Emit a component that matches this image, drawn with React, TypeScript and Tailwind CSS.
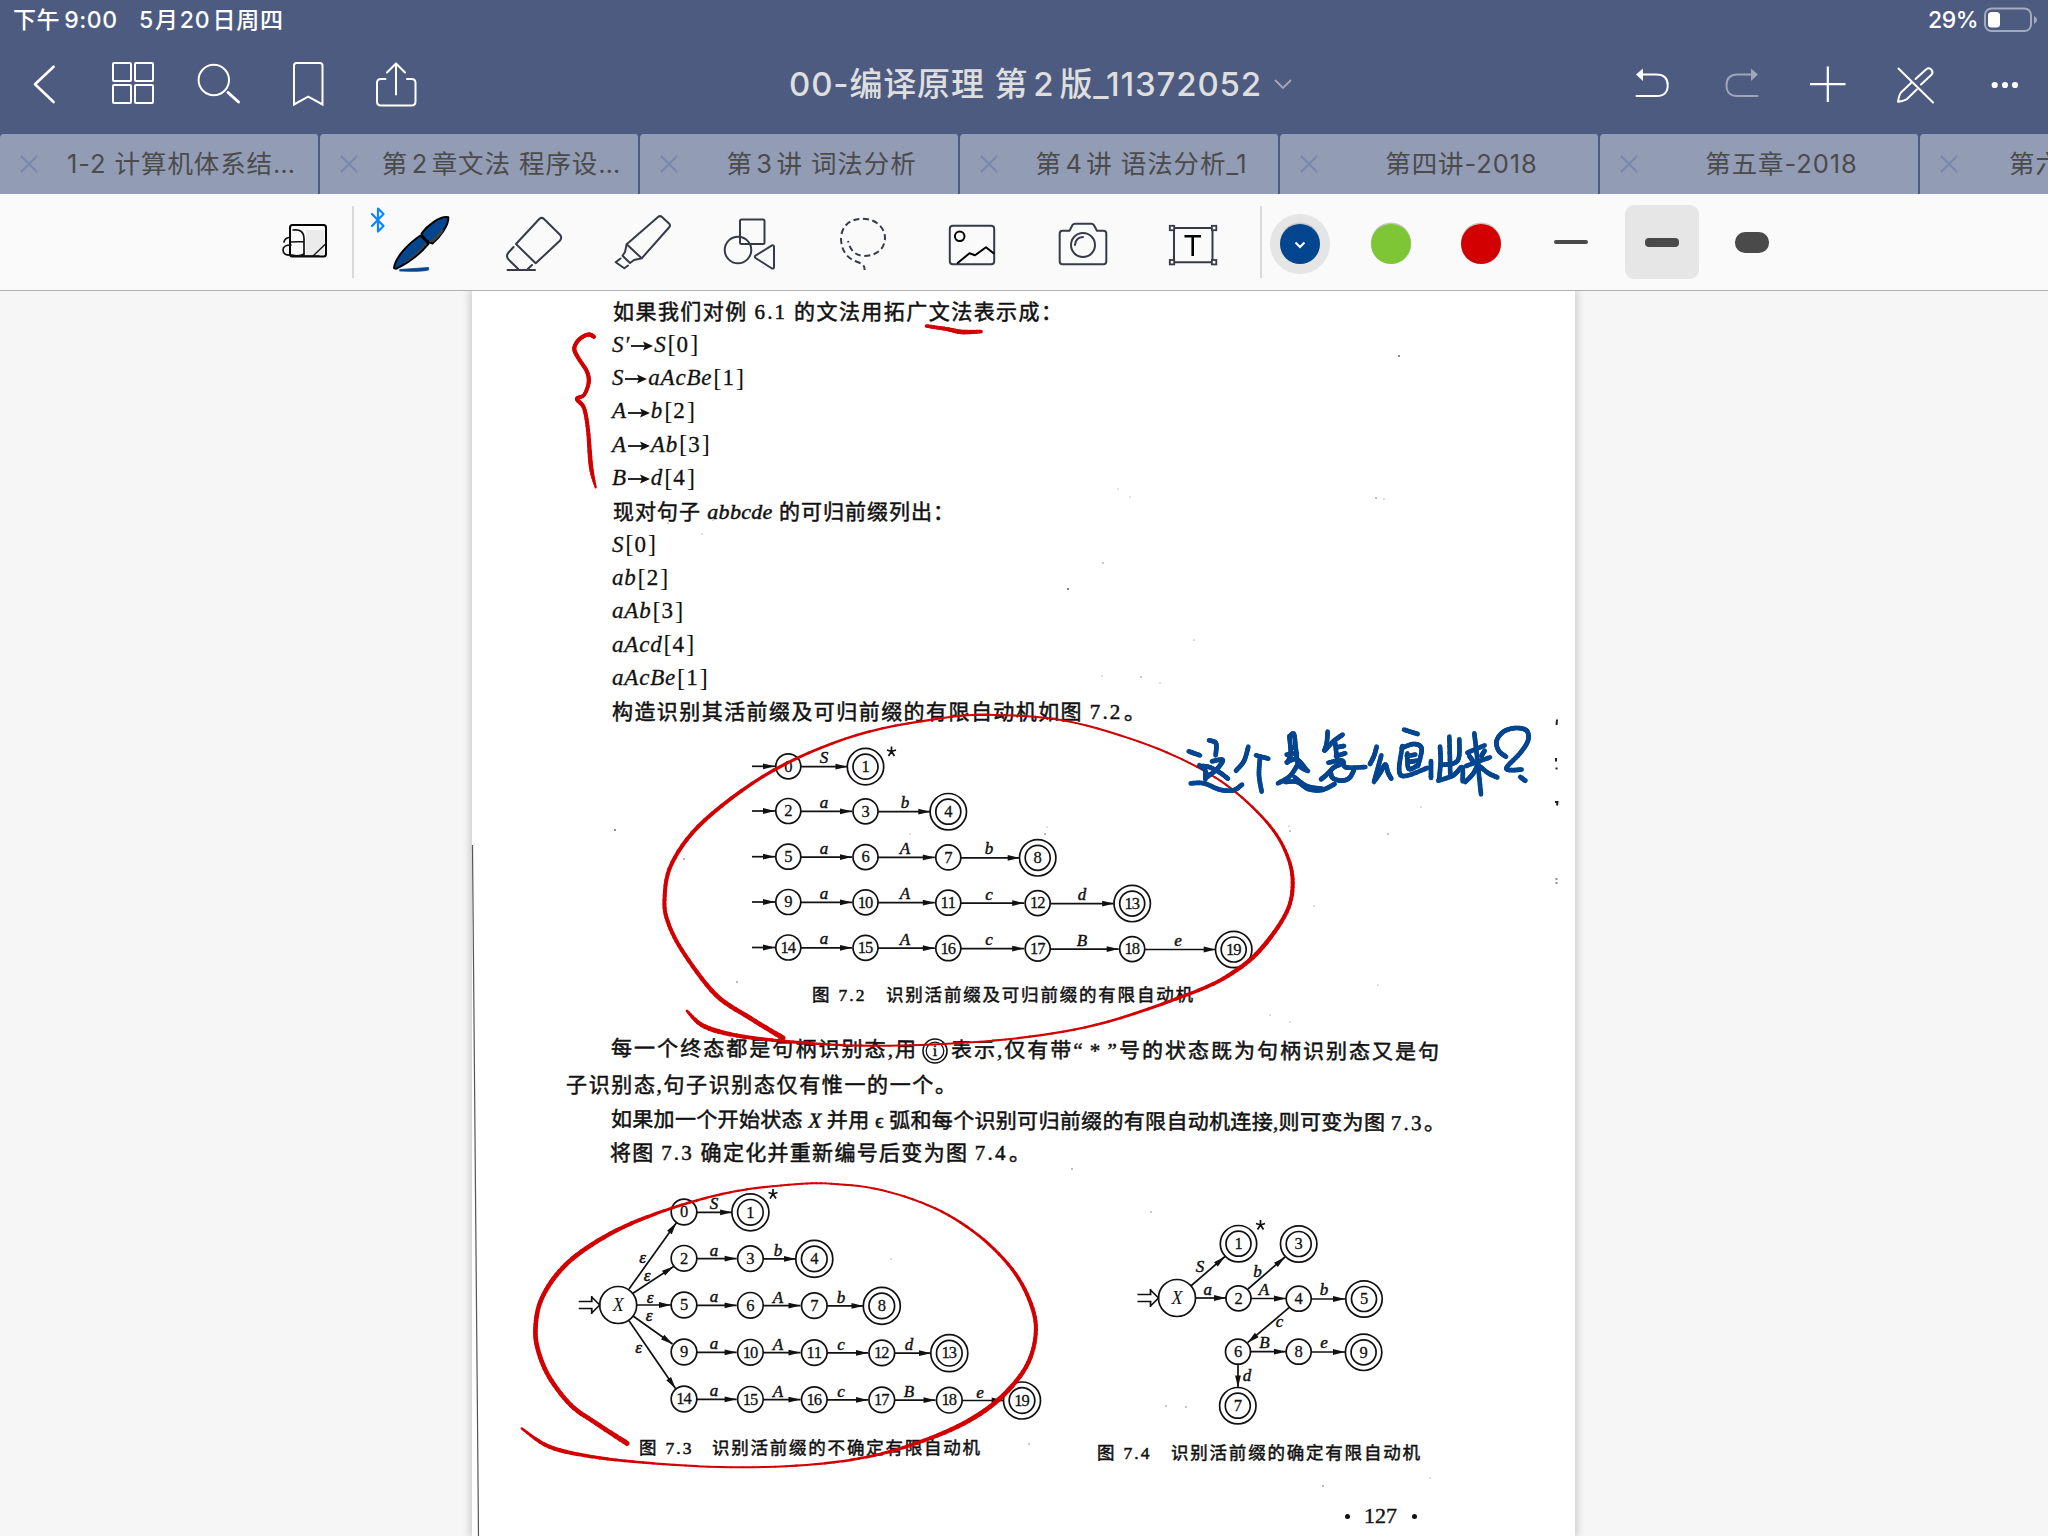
import React from "react";

type Pt = [number, number, number];

/* ---------- shared drawing helpers ---------- */

function Cell({ x, w, y, h, children }: { x: number; w: number; y: number; h: number; children?: React.ReactNode }) {
  return (
    <svg width={w} height={h} viewBox={`${x} ${y} ${w} ${h}`} className="block shrink-0" fill="none" strokeLinecap="round" strokeLinejoin="round">
      {children}
    </svg>
  );
}

/* Pressure-sensitive pen stroke: Catmull-Rom through [x, y, width] points. */
function Ink({ pts, color }: { pts: Pt[]; color: string }) {
  const segs: React.ReactNode[] = [];
  const n = pts.length;
  const steps = 7;
  let prev: Pt = pts[0];
  for (let i = 0; i < n - 1; i++) {
    const p0 = pts[Math.max(0, i - 1)];
    const p1 = pts[i];
    const p2 = pts[i + 1];
    const p3 = pts[Math.min(n - 1, i + 2)];
    for (let s = 1; s <= steps; s++) {
      const t = s / steps;
      const f = (k: 0 | 1 | 2) =>
        0.5 *
        (2 * p1[k] +
          (p2[k] - p0[k]) * t +
          (2 * p0[k] - 5 * p1[k] + 4 * p2[k] - p3[k]) * t * t +
          (3 * p1[k] - p0[k] - 3 * p2[k] + p3[k]) * t * t * t);
      const q: Pt = [f(0), f(1), f(2)];
      segs.push(<line key={`${i}-${s}`} x1={prev[0]} y1={prev[1]} x2={q[0]} y2={q[1]} strokeWidth={(prev[2] + q[2]) / 2} />);
      prev = q;
    }
  }
  return (
    <g stroke={color} strokeLinecap="round">
      {segs}
    </g>
  );
}

/* ---------- header ---------- */

function StatusBar() {
  return (
    <div className="flex h-[34px] items-center pl-[13px] pr-[10px] text-[23px] font-medium leading-none text-white">
      <span className="mt-[6px] w-[104px] whitespace-nowrap tracking-[0.6px]">
        下午<span className="ml-[4px]">9:00</span>
      </span>
      <span className="ml-[22px] mt-[6px] whitespace-nowrap tracking-[0.8px]">
        5<span className="mx-[1px]">月</span>20<span className="ml-[2px]">日周四</span>
      </span>
      <span className="ml-auto mt-[6px] text-[23px] tracking-[-0.5px]">29%</span>
      <svg width="54" height="26" viewBox="0 0 54 26" className="ml-[6px] mt-[6px]">
        <rect x="1" y="1.5" width="46" height="22.5" rx="6.5" fill="none" stroke="#a3abbf" strokeWidth="2" />
        <rect x="4" y="5" width="12" height="15.5" rx="3.5" fill="#fff" />
        <path d="M50 9v8q3-1.500 3-4t-3-4z" fill="#a3abbf" />
      </svg>
    </div>
  );
}

function NavBar() {
  const c = { y: 34, h: 100 };
  return (
    <div className="flex h-[100px]">
      <Cell x={0} w={90} {...c}>
        <path d="M53.600 66.700 35 84.300 53.600 102" stroke="#fff" strokeWidth="2.600" />
      </Cell>
      <Cell x={90} w={86} {...c}>
        <g stroke="#fff" strokeWidth="2">
          <rect x="113" y="63" width="18" height="18" rx="1" />
          <rect x="135" y="63" width="18" height="18" rx="1" />
          <rect x="113" y="85" width="18" height="18" rx="1" />
          <rect x="135" y="85" width="18" height="18" rx="1" />
        </g>
      </Cell>
      <Cell x={176} w={86} {...c}>
        <circle cx="213.800" cy="80" r="15.200" stroke="#fff" strokeWidth="2" />
        <path d="M228 92.500 238.500 102" stroke="#fff" strokeWidth="3" />
      </Cell>
      <Cell x={262} w={88} {...c}>
        <path d="M294 104.500V65.500q0-2.500 2.500-2.500H320q2.500 0 2.500 2.500v39L308.200 96.700z" stroke="#fff" strokeWidth="2" strokeLinejoin="miter" />
      </Cell>
      <Cell x={350} w={90} {...c}>
        <path d="M385.500 79H381q-4 0-4 4v18.500q0 4 4 4h30.500q4 0 4-4V83q0-4-4-4H407M396 94.500V64M387 72.500l9-9 9 9" stroke="#fff" strokeWidth="2" />
      </Cell>
      <div className="flex h-full flex-1 items-center pl-[349px]">
        <span className="w-[471px] whitespace-nowrap text-[33px] font-medium leading-none tracking-[0.85px] text-[#dedede]">
          00-编译原理 第<span className="mx-[5px]">2</span>版_11372052
        </span>
        <svg width="20" height="14" viewBox="0 0 20 14" className="ml-[13px]" fill="none">
          <path d="M2 3 10 11 18 3" stroke="#a7a9b0" strokeWidth="1.800" />
        </svg>
      </div>
      <Cell x={1600} w={100} {...c}>
        <path d="M1643 74.500h13.500q11.200 0 11.200 10.800T1656.500 96H1636.500" stroke="#fff" strokeWidth="2" />
        <path d="M1636 74.500 1643 68.500v12.500z" fill="#fff" />
      </Cell>
      <Cell x={1700} w={85} {...c}>
        <g opacity=".45">
          <path d="M1751 74.500h-13.500q-11 0-11 10.800T1737.500 96H1757.500" stroke="#fff" strokeWidth="2" />
          <path d="M1758 74.500 1751 68.500v12.500z" fill="#fff" />
        </g>
      </Cell>
      <Cell x={1785} w={85} {...c}>
        <path d="M1810 84.200h35.500M1827.800 66.500v35.500" stroke="#fff" strokeWidth="2.200" strokeLinecap="butt" />
      </Cell>
      <Cell x={1870} w={90} {...c}>
        <g stroke="#fff" strokeWidth="2">
          <path d="M1898.500 68.500 1933 102.500" />
          <path d="M1915.500 79 1926 69.500q3-2.500 5.500.300 2.200 2.700-.300 5.200L1921 84.500M1911.500 82.500 1901 92.500q-2 2.500-3 9.200 6.500-.700 9-2.700l10-9.700" />
        </g>
      </Cell>
      <Cell x={1960} w={88} {...c}>
        <circle cx="1994.700" cy="85" r="3.100" fill="#fff" />
        <circle cx="2005" cy="85" r="3.100" fill="#fff" />
        <circle cx="2015" cy="85" r="3.100" fill="#fff" />
      </Cell>
    </div>
  );
}

function Digit({ children }: { children: string }) {
  return <span className="mx-[3.500px]">{children}</span>;
}

const TABS: { id: string; title: React.ReactNode }[] = [
  { id: "arch", title: "1-2 计算机体系结…" },
  { id: "ch2", title: <>第<Digit>2</Digit>章文法 程序设…</> },
  { id: "l3", title: <>第<Digit>3</Digit>讲 词法分析</> },
  { id: "l4", title: <>第<Digit>4</Digit>讲 语法分析_1</> },
  { id: "l4-2018", title: "第四讲-2018" },
  { id: "ch5", title: "第五章-2018" },
  { id: "ch6", title: "第六章、第七章" },
];

function TabBar() {
  return (
    <div className="flex h-[60px] overflow-hidden">
      {TABS.map((t) => (
        <div key={t.id} className="flex h-full w-[320px] shrink-0 items-center rounded-t-[4px] border-r-2 border-[#4d5b80] bg-[#929cb5]">
          <svg width="18" height="18" viewBox="0 0 18 18" className="ml-[20px] shrink-0">
            <path d="M1 1 17 17M17 1 1 17" stroke="#7988a9" strokeWidth="2.200" />
          </svg>
          <span className="ml-[7px] flex-1 whitespace-nowrap text-center text-[25.500px] leading-none tracking-[0.9px] text-[#4b4b4b]">{t.title}</span>
        </div>
      ))}
    </div>
  );
}

/* ---------- tool bar ---------- */

function ColorDot({ fill, selected }: { fill: string; selected?: boolean }) {
  return (
    <svg width="60" height="60" viewBox="0 0 60 60" className="block shrink-0" fill="none">
      {selected && <circle cx="30" cy="30" r="30" fill="#e5e5e5" />}
      <circle cx="30" cy="28.500" r="20" fill="#c6c6c6" />
      <circle cx="30" cy="30" r="20" fill={fill} />
      {selected && <path d="M25.500 28.500 30 33l4.500-4.500" stroke="#fff" strokeWidth="2" />}
    </svg>
  );
}

function ToolBar() {
  const c = { y: 194, h: 96 };
  const ink = "#363b48";
  return (
    <div className="flex h-[97px] items-start border-b border-[#b0b0b0] bg-[#fafafa]">
      <div className="w-[270px] shrink-0" />
      <Cell x={270} w={82} {...c}>
        <rect x="306" y="230" width="18" height="25" fill="#ebebeb" />
        <rect x="290" y="225" width="36" height="31.500" rx="2.500" stroke="#000" strokeWidth="2" />
        <path d="M293 230q11-1.500 11 9v16M304 241.500l-13 .500M284 242q1-4 5-4.500M304 254q-5 3-12 1-9 1-9-5 0-5 8-5M291 256h28" stroke="#111" strokeWidth="1.700" />
        <path d="M313 256 325 244.500" stroke="#111" strokeWidth="1.300" />
      </Cell>
      <div className="mt-[12px] h-[72px] w-[2px] shrink-0 bg-[#d9d9d9]" />
      <Cell x={354} w={116} {...c}>
        <path d="M372 214 383.500 226 378 231.500V208.500L383.500 214 372 226" stroke="#0a84ff" strokeWidth="2.200" />
        <path d="M394 268C395 259 406 245 420.500 235.500L428.500 243.800C420 254 408 263 396 268.800Z" fill="#04458f" stroke="#000" strokeWidth="2" />
        <path d="M404 262Q418 252.500 424.500 243l2.500 1C419.500 253 412 259 404 263.500Z" fill="#3c4048" />
        <path d="M421.500 233.500C427 226 440 215.500 448.300 217.300 449 225 440 237 432.500 243.500Q425 241.500 421.500 233.500Z" fill="#04458f" stroke="#000" strokeWidth="2" />
        <path d="M428.500 241.500Q437 236 441.500 229L444 230Q439 238.500 432.500 242.500Z" fill="#3c4048" />
        <path d="M400 269.500 428.500 267.500v2.500Q422 272 400 271Z" fill="#04458f" stroke="#04458f" strokeWidth=".8" />
      </Cell>
      <Cell x={470} w={116} {...c}>
        <g stroke={ink} strokeWidth="2">
          <path d="M539.500 218.800 516 244 535.700 263.300 559.800 240.800Q562.500 237.500 560 234.800L544 219Q541.700 216.800 539.500 218.800Z" />
          <path d="M513.500 247 508.500 252.500Q505.500 256 508.500 259.500L518 268.800M528 268.800 532 265M507.500 270H535" />
        </g>
      </Cell>
      <Cell x={586} w={114} {...c}>
        <g stroke={ink} strokeWidth="2">
          <path d="M626.700 244.300 658 217Q660 215.200 662 217L669 223.500Q671 225.600 669 227.500L641.700 258.300Z" />
          <path d="M626.700 244.300 625 252 622.500 255.800 630 263 634 260 641.700 258.300M620.500 258.500 615.700 262.300 624.300 268.300 628 265.500" />
        </g>
      </Cell>
      <Cell x={700} w={110} {...c}>
        <g stroke={ink} strokeWidth="2">
          <rect x="740" y="219.500" width="24.500" height="24.500" rx="1.500" />
          <circle cx="738" cy="250" r="13.300" />
          <path d="M772 245.400 755.500 255.600Q754 256.800 755.500 258L772 268.500Q774 269 774 267V247Q774 244.800 772 245.400Z" />
        </g>
      </Cell>
      <Cell x={810} w={110} {...c}>
        <g stroke={ink} strokeWidth="2" strokeLinecap="butt" strokeDasharray="6 3.500">
          <path d="M841.500 234C844 223 853 218.800 863 218.800 875 218.800 885 227 885 238 885 249 876 256 864 256 855 255.500 850 250 848 241" />
          <path d="M841 238C841 250 847 258 855 261 862 263.500 865 265 864.500 270" />
        </g>
      </Cell>
      <Cell x={920} w={110} {...c}>
        <rect x="949.800" y="225.800" width="44.400" height="38.400" rx="3" stroke={ink} strokeWidth="2" />
        <circle cx="959.700" cy="236.300" r="4.800" stroke="#000" strokeWidth="2" />
        <path d="M957.700 263 969.500 253.200 975 255.300 986 247.200 993.500 253.300" stroke="#000" strokeWidth="2" />
      </Cell>
      <Cell x={1030} w={110} {...c}>
        <g stroke={ink} strokeWidth="2">
          <path d="M1062.500 230.700H1069.500L1072.500 225Q1073.300 223.700 1075 223.700H1091.500Q1093 223.700 1093.800 225L1097 230.700H1103.500Q1106.300 230.700 1106.300 233.500V261.500Q1106.300 264.200 1103.500 264.200H1062.500Q1059.700 264.200 1059.700 261.500V233.500Q1059.700 230.700 1062.500 230.700Z" />
          <circle cx="1083" cy="245" r="12" />
          <path d="M1075 245Q1075.500 237.500 1083 237" />
        </g>
      </Cell>
      <Cell x={1140} w={120} {...c}>
        <rect x="1174" y="228" width="38.500" height="34.200" stroke={ink} strokeWidth="2" />
        <g fill="#fafafa" stroke={ink} strokeWidth="1.800" strokeLinejoin="miter">
          <rect x="1169.800" y="225.800" width="4.400" height="4.400" />
          <rect x="1211.900" y="225.800" width="4.400" height="4.400" />
          <rect x="1169.800" y="260" width="4.400" height="4.400" />
          <rect x="1211.900" y="260" width="4.400" height="4.400" />
        </g>
        <path d="M1184.500 236.200H1201M1192.700 236.500V256" stroke="#000" strokeWidth="2.600" strokeLinecap="butt" />
      </Cell>
      <div className="mt-[12px] h-[72px] w-[2px] shrink-0 bg-[#d9d9d9]" />
      <div className="ml-[8px] mt-[20px] flex gap-[30.500px]">
        <ColorDot fill="#04458f" selected />
        <ColorDot fill="#7ec636" />
        <ColorDot fill="#d20000" />
      </div>
      <div className="ml-[23px] mt-[11px] flex h-[74px] items-center">
        <div className="flex w-[74px] justify-center">
          <div className="h-[4px] w-[34px] rounded-[2px] bg-[#4a4a4a]" />
        </div>
        <div className="ml-[17px] flex h-[74px] w-[74px] items-center justify-center rounded-[9px] bg-[#e6e6e6]">
          <div className="h-[9px] w-[34px] rounded-[4px] bg-[#4a4a4a]" />
        </div>
        <div className="ml-[16px] flex w-[74px] justify-center">
          <div className="h-[21px] w-[34px] rounded-[10px] bg-[#4a4a4a]" />
        </div>
      </div>
    </div>
  );
}

/* ---------- automata diagrams ---------- */

function State({ x, y, n, final, r = 12.5 }: { x: number; y: number; n: string; final?: boolean; r?: number }) {
  return (
    <g>
      <circle cx={x} cy={y} r={r} fill="none" stroke="#111" strokeWidth="1.700" />
      {final && <circle cx={x} cy={y} r={r + 5.7} fill="none" stroke="#111" strokeWidth="1.700" />}
      <text x={x} y={y + 5.3} textAnchor="middle" fontSize="16.500" fill="#111" stroke="#111" strokeWidth=".3" textLength={n.length > 1 ? 15.5 : undefined}>
        {n}
      </text>
    </g>
  );
}

function Arrow({ x1, y1, x2, y2 }: { x1: number; y1: number; x2: number; y2: number }) {
  const a = Math.atan2(y2 - y1, x2 - x1);
  const bx = x2 - 12 * Math.cos(a);
  const by = y2 - 12 * Math.sin(a);
  const dx = 2.9 * Math.sin(a);
  const dy = -2.9 * Math.cos(a);
  return (
    <g>
      <line x1={x1} y1={y1} x2={x2} y2={y2} stroke="#111" strokeWidth="1.700" />
      <polygon points={`${x2},${y2} ${bx + dx},${by + dy} ${bx - dx},${by - dy}`} fill="#111" />
    </g>
  );
}

function Label({ x, y, t }: { x: number; y: number; t: string }) {
  return (
    <text x={x} y={y} textAnchor="middle" fontSize="17" fontStyle="italic" fill="#111" stroke="#111" strokeWidth=".45">
      {t}
    </text>
  );
}

function Star({ x, y }: { x: number; y: number }) {
  return <path d={`M${x} ${y}V${y - 5}M${x} ${y}L${x - 4.500} ${y - 1.500}M${x} ${y}L${x + 4.500} ${y - 1.500}M${x} ${y}L${x - 3} ${y + 4.500}M${x} ${y}L${x + 3} ${y + 4.500}`} stroke="#111" strokeWidth="1.700" fill="none" />;
}

const CHAINS: { nodes: string[]; edges: string[] }[] = [
  { nodes: ["0", "1"], edges: ["S"] },
  { nodes: ["2", "3", "4"], edges: ["a", "b"] },
  { nodes: ["5", "6", "7", "8"], edges: ["a", "A", "b"] },
  { nodes: ["9", "10", "11", "12", "13"], edges: ["a", "A", "c", "d"] },
  { nodes: ["14", "15", "16", "17", "18", "19"], edges: ["a", "A", "c", "B", "e"] },
];

function Chains({ xs, ys, labels, r, lift }: { xs: number[]; ys: number[]; labels: number[]; r: number; lift: number }) {
  return (
    <g>
      {CHAINS.map((ch, i) => (
        <g key={i}>
          {ch.nodes.map((n, j) => {
            const y = ys[i] + (xs[j] - xs[0]) * 0.0045;
            const last = j === ch.nodes.length - 1;
            return (
              <g key={n}>
                <State x={xs[j]} y={y} n={n} final={last} r={r} />
                {j > 0 && <Arrow x1={xs[j - 1] + r} y1={y} x2={xs[j] - (last ? r + 5.5 : r + 1)} y2={y} />}
                {j > 0 && <Label x={labels[j - 1]} y={y - lift} t={ch.edges[j - 1]} />}
              </g>
            );
          })}
        </g>
      ))}
    </g>
  );
}

function Figure72() {
  const ys = [766.3, 811, 856.7, 902, 947.5];
  return (
    <svg width="1103" height="249" viewBox="472 729 1103 249" className="block">
      {ys.map((y) => (
        <Arrow key={y} x1={752} y1={y} x2={775} y2={y} />
      ))}
      <Chains xs={[788.3, 865.5, 948.3, 1037.7, 1132.2, 1233.7]} ys={ys} labels={[824, 905, 989, 1082, 1178]} r={12.5} lift={3.5} />
      <Star x={891.5} y={751.5} />
    </svg>
  );
}

function StartMark({ x, y }: { x: number; y: number }) {
  return <path d={`M${x - 21} ${y - 3.500}H${x - 7}M${x - 21} ${y + 3.500}H${x - 7}M${x - 8} ${y - 9}V${y - 4}M${x - 8} ${y + 4}V${y + 9}M${x - 8} ${y - 8}L${x} ${y}L${x - 8} ${y + 8}`} stroke="#111" strokeWidth="1.700" fill="none" />;
}

function StartState({ x, y }: { x: number; y: number }) {
  return (
    <g>
      <circle cx={x} cy={y} r="18.500" fill="none" stroke="#111" strokeWidth="1.700" />
      <text x={x} y={y + 6} textAnchor="middle" fontSize="18" fontStyle="italic" fill="#111">
        X
      </text>
      <StartMark x={x - 18.5} y={y} />
    </g>
  );
}

function Figure73() {
  return (
    <svg width="600" height="260" viewBox="472 1170 600 260" className="block">
      <StartState x={618.2} y={1305} />
      <Chains xs={[684, 750.4, 814.3, 881.8, 949.3, 1022]} ys={[1212, 1258.3, 1305, 1352, 1399]} labels={[714, 778, 841, 909, 980]} r={12.8} lift={3} />
      <Arrow x1={629} y1={1289} x2={676.4} y2={1222.8} />
      <Arrow x1={633} y1={1293.3} x2={673.6} y2={1266.5} />
      <Arrow x1={637} y1={1305} x2={671} y2={1305} />
      <Arrow x1={633} y1={1316} x2={672.5} y2={1344} />
      <Arrow x1={629} y1={1320.7} x2={675.5} y2={1388.5} />
      <Label x={642.5} y={1263} t="ε" />
      <Label x={647} y={1281} t="ε" />
      <Label x={650} y={1303} t="ε" />
      <Label x={649} y={1321} t="ε" />
      <Label x={638.500} y={1353} t="ε" />
      <Star x={773} y={1194} />
    </svg>
  );
}

function Figure74() {
  return (
    <svg width="503" height="265" viewBox="1072 1170 503 265" className="block">
      <StartState x={1177} y={1298} />
      <State x={1238.5} y={1243.7} n="1" final />
      <State x={1298.7} y={1244} n="3" final />
      <State x={1238.5} y={1298.3} n="2" />
      <State x={1298.7} y={1298.7} n="4" />
      <State x={1364} y={1299} n="5" final />
      <State x={1238} y={1351.7} n="6" />
      <State x={1298.7} y={1351.7} n="8" />
      <State x={1363.6} y={1352.3} n="9" final />
      <State x={1237.8} y={1405.7} n="7" final />
      <Arrow x1={1190.8} y1={1286} x2={1225} y2={1256.5} />
      <Arrow x1={1248} y1={1289} x2={1285} y2={1257} />
      <Arrow x1={1195.5} y1={1298} x2={1226} y2={1298} />
      <Arrow x1={1251} y1={1298.5} x2={1286} y2={1298.5} />
      <Arrow x1={1311.5} y1={1299} x2={1345} y2={1299} />
      <Arrow x1={1289} y1={1307.7} x2={1247.6} y2={1342.7} />
      <Arrow x1={1250.5} y1={1351.7} x2={1286} y2={1351.7} />
      <Arrow x1={1311.5} y1={1352} x2={1345} y2={1352} />
      <Arrow x1={1238} y1={1364.5} x2={1238} y2={1387.5} />
      <Label x={1200} y={1272} t="S" />
      <Label x={1257.500} y={1276.500} t="b" />
      <Label x={1207.700} y={1294.500} t="a" />
      <Label x={1264} y={1294.500} t="A" />
      <Label x={1324} y={1294.500} t="b" />
      <Label x={1279.500} y={1326.500} t="c" />
      <Label x={1264.500} y={1348.300} t="B" />
      <Label x={1324} y={1348.300} t="e" />
      <Label x={1247} y={1381} t="d" />
      <Star x={1260.5} y={1225} />
    </svg>
  );
}

/* ---------- handwriting ---------- */

const RED = "#d20000";
const BLUE = "#04458f";

const RED_STROKES: Pt[][] = [
  [[783, 1038, 5], [750, 1018, 4.5], [716, 995, 4.5], [685, 955, 4], [669, 925, 4], [664.500, 900, 4], [672, 863, 4], [705, 820, 4], [774, 770, 3.2], [857, 735, 2.4], [943, 718, 2.2], [995.6, 715, 2], [1065, 720.7, 2], [1140, 742, 2], [1196.7, 766.7, 2], [1236.7, 793, 2.2], [1270, 826, 2.8], [1287, 855, 3.4], [1292.7, 883, 4], [1286.7, 912, 4], [1263, 946.7, 4.4], [1236.7, 970, 4.2], [1198, 990.5, 3.5], [1108, 1021.7, 2.6], [1030, 1036.7, 2.2], [943.6, 1044, 2], [870, 1045.7, 2], [813, 1043.5, 2.6], [744, 1036.7, 4], [705, 1026.7, 4.6], [687, 1011, 2.6]],
  [[627, 1443.3, 5], [595.7, 1423, 4.5], [570.7, 1405, 4.5], [549, 1376.7, 4.5], [538, 1350, 4.5], [535.5, 1328, 4.5], [540.4, 1301.7, 4.5], [556.4, 1275, 4.5], [581.4, 1251.7, 4.5], [624, 1226.7, 4], [681.4, 1205, 2.8], [738.6, 1190.7, 2.2], [795.7, 1184.3, 2], [831.4, 1183.7, 2], [881.4, 1190, 2], [935, 1208.3, 2.2], [978, 1235, 2.8], [1012, 1269, 3.4], [1031, 1304, 4], [1035.7, 1334, 4], [1026, 1367, 4.3], [999.3, 1399, 4.6], [963.6, 1423.5, 4.6], [917, 1443, 3.6], [867, 1457, 2.8], [806.4, 1465, 2.2], [731.4, 1467.3, 2], [652.9, 1463.3, 2.4], [592, 1456.7, 3.4], [549.3, 1446.7, 4], [521.8, 1428.5, 2.4]],
  [[594, 336.8, 4], [588.6, 334.5, 4], [579.6, 339, 4], [574.3, 348.3, 4], [578.3, 358, 4], [587, 371.7, 4], [588.6, 383, 4], [584, 395, 3.6], [577, 399, 4], [584, 408, 4], [588, 430, 4], [591, 466.7, 4.4], [595.7, 487.5, 2]],
  [[926.5, 326, 3.6], [946.6, 329, 4], [962, 332, 4.6], [981, 331.5, 3.6]],
];

const BLUE_STROKES: [number, number][][] = [
  [[207, 151], [228, 160], [227, 196]],
  [[146, 184], [180, 196]],
  [[216, 214], [248, 210], [230, 238], [200, 262]],
  [[186, 228], [210, 232], [240, 248], [264, 266]],
  [[178, 226], [195, 240], [196, 268]],
  [[152, 280], [192, 280], [240, 299], [280, 301], [306, 284]],
  [[325, 170], [312, 213], [288, 242]],
  [[348, 196], [385, 206]],
  [[360, 205], [357, 255], [365, 305]],
  [[448, 138], [452, 190], [442, 218]],
  [[450, 138], [462, 133], [468, 180], [476, 225], [504, 243]],
  [[452, 172], [464, 172]],
  [[440, 194], [470, 190]],
  [[440, 217], [470, 208], [500, 240]],
  [[474, 222], [450, 258], [414, 280]],
  [[436, 276], [472, 276], [505, 297], [546, 300], [584, 282]],
  [[464, 262], [500, 288], [546, 296]],
  [[563, 125], [560, 160], [553, 182]],
  [[608, 134], [580, 154], [556, 180]],
  [[585, 156], [592, 212]],
  [[590, 172], [612, 168]],
  [[588, 198], [616, 190]],
  [[543, 268], [560, 254], [582, 232], [600, 224]],
  [[572, 246], [578, 264], [604, 272], [628, 264], [642, 240]],
  [[565, 218], [606, 212], [618, 232], [676, 231]],
  [[710, 170], [702, 198], [690, 222]],
  [[724, 196], [712, 240], [702, 276]],
  [[706, 270], [722, 246], [736, 224], [744, 248], [754, 266]],
  [[792, 119], [833, 132]],
  [[787, 168], [782, 256], [862, 234]],
  [[785, 174], [822, 162], [845, 176], [834, 228]],
  [[802, 190], [806, 236], [834, 226]],
  [[800, 198], [826, 194]],
  [[806, 216], [832, 212]],
  [[873, 213], [873, 264]],
  [[900, 170], [902, 215], [897, 270]],
  [[928, 140], [931, 258]],
  [[958, 148], [953, 212], [904, 225]],
  [[895, 272], [940, 256], [966, 232], [968, 274]],
  [[1003, 130], [1010, 190], [1023, 313]],
  [[982, 188], [1034, 166]],
  [[988, 198], [998, 212]],
  [[1034, 182], [1024, 198]],
  [[978, 228], [1050, 202]],
  [[1014, 222], [1000, 250], [976, 276]],
  [[1018, 228], [1046, 250], [1072, 262]],
  [[1098, 200], [1076, 182], [1070, 152], [1092, 124], [1128, 114], [1160, 122], [1164, 152], [1140, 190], [1099, 236], [1145, 239]],
  [[1141, 261], [1156, 272]],
];

const SPECKS: [number, number, number][] = [
  [1399, 356, 1], [1068, 589, 1.1], [1103, 563, 0.7], [1376, 498, 0.8], [1384, 499, 0.6], [1118, 489, 0.5], [1130, 497, 0.5], [1194, 640, 0.6],
  [1102, 676, 0.5], [1141, 677, 0.7], [1160, 683, 0.6], [615, 830, 1], [684, 859, 0.8], [737, 982, 0.8], [1045, 834, 0.8], [1047, 827, 0.5], [910, 834, 0.5],
  [1289, 826, 0.6], [1290, 831, 0.7], [1314, 906, 0.6], [1388, 834, 0.7], [1421, 807, 0.6], [1378, 985, 0.6], [1270, 1015, 0.6], [1290, 1022, 0.6], [1072, 1169, 0.8],
  [891, 1259, 0.6], [1029, 1444, 0.7], [1166, 1406, 0.7], [1186, 1407, 0.7], [1151, 1212, 0.7], [1323, 1486, 0.8], [1430, 1478, 0.6], [668, 523, 0.6], [702, 534, 0.6], [713, 520, 0.6],
];

function InkLayer() {
  return (
    <svg width="1128" height="1245" viewBox="447 291 1128 1245" className="pointer-events-none absolute left-[-25px] top-0" fill="none">
      <path d="M472.500 845 474 1020 478.500 1536" stroke="#555" strokeWidth="1.200" />
      {SPECKS.map(([x, y, r], i) => (
        <circle key={i} cx={x} cy={y} r={r} fill="#666" />
      ))}
      <path d="M1557 719.500 1556.500 725M1556 758v3.500M1556.500 767.500v2M1555 802h2.500l-.5 3.500M1556.500 878.500v1M1556.500 882.500v1" stroke="#222" strokeWidth="2" />
      {RED_STROKES.map((p, i) => (
        <Ink key={i} pts={p} color={RED} />
      ))}
      <g transform="translate(1140 690) scale(.33333)">
        {BLUE_STROKES.map((p, i) => (
          <Ink key={i} pts={p.map(([x, y]) => [x, y, 14] as Pt)} color={BLUE} />
        ))}
      </g>
    </svg>
  );
}

/* ---------- book page ---------- */

function Formula({ lhs, rhs, n }: { lhs?: string; rhs: string; n: number }) {
  return (
    <p className="flex h-[33.33px] items-center whitespace-nowrap pb-[2px] pl-[140px] text-[23px] tracking-[0.8px] [-webkit-text-stroke:0.3px_#111]">
      {lhs && <i>{lhs}</i>}
      {lhs && (
        <svg width="24" height="12" viewBox="0 0 24 12" className="mt-[2px]">
          <path d="M1 6H17" stroke="#111" strokeWidth="1.800" />
          <path d="M13 1.500 23 6 13 10.500 15 6z" fill="#111" />
        </svg>
      )}
      <i>{rhs}</i>
      <span className="mb-[2px] ml-[1px] text-[25px] [-webkit-text-stroke:0px]">[</span>
      <span>{n}</span>
      <span className="mb-[2px] ml-[1px] text-[25px] [-webkit-text-stroke:0px]">]</span>
    </p>
  );
}

const CN = "whitespace-nowrap leading-none [text-align-last:justify] [-webkit-text-stroke:0.5px_#111]";

function Num({ children }: { children: string }) {
  return <span className="tracking-[2.200px]">{children}</span>;
}

function Caption({ num, title, className, titleClass }: { num: string; title: string; className: string; titleClass: string }) {
  return (
    <div className={`flex h-[36px] items-center text-[17.500px] leading-none ${className}`}>
      <p className="flex w-[55px] whitespace-nowrap [-webkit-text-stroke:0.5px_#111]">
        图<span className="ml-[9px] tracking-[2px]">{num}</span>
      </p>
      <p className={`${CN} ${titleClass}`}>{title}</p>
    </div>
  );
}

function BookPage() {
  return (
    <div className="relative ml-[472px] flex h-[1245px] w-[1103px] flex-col bg-white pt-[5px] text-[21px] text-[#111] shadow-[0_0_8px_2px_rgba(0,0,0,0.18)] [font-family:'Liberation_Serif','Noto_Sans_CJK_SC',serif]">
      <div className="flex h-[33.33px] items-center pl-[141px]">
        <p className={`${CN} w-[449px]`}>
          如果我们对例 <Num>6.1</Num> 的文法用拓广文法表示成：
        </p>
      </div>
      <Formula lhs="S′" rhs="S" n={0} />
      <Formula lhs="S" rhs="aAcBe" n={1} />
      <Formula lhs="A" rhs="b" n={2} />
      <Formula lhs="A" rhs="Ab" n={3} />
      <Formula lhs="B" rhs="d" n={4} />
      <div className="flex h-[33.33px] items-center pb-[2px] pl-[141px]">
        <p className={`${CN} w-[341px]`}>
          现对句子 <i className="text-[22px] tracking-[0.3px]">abbcde</i> 的可归前缀列出：
        </p>
      </div>
      <Formula rhs="S" n={0} />
      <Formula rhs="ab" n={2} />
      <Formula rhs="aAb" n={3} />
      <Formula rhs="aAcd" n={4} />
      <Formula rhs="aAcBe" n={1} />
      <div className="flex h-[33.33px] items-center pl-[140px]">
        <p className={`${CN} w-[533px]`}>
          构造识别其活前缀及可归前缀的有限自动机如图 <Num>7.2</Num>。
        </p>
      </div>
      <div className="h-[249px] shrink-0">
        <Figure72 />
      </div>
      <Caption num="7.2" title="识别活前缀及可归前缀的有限自动机" className="mt-[-1px] pl-[340px]" titleClass="ml-[19px] w-[307px]" />
      <div className="mt-[17px] flex h-[37px] origin-left rotate-[0.25deg] items-center pl-[139px]">
        <p className={`${CN} w-[305px]`}>每一个终态都是句柄识别态,用</p>
        <svg width="28" height="26" viewBox="0 0 28 26" className="ml-[5px]" fill="none">
          <circle cx="14" cy="13" r="12" stroke="#111" strokeWidth="1.600" />
          <circle cx="14" cy="13" r="8.800" stroke="#111" strokeWidth="1.300" />
          <text x="14" y="18" textAnchor="middle" fontSize="16" fill="#111" stroke="#111" strokeWidth=".5">
            i
          </text>
        </svg>
        <p className={`${CN} ml-[2px] w-[488px]`}>表示,仅有带“ * ”号的状态既为句柄识别态又是句</p>
      </div>
      <div className="flex h-[36px] items-center pl-[94px] pt-[1px]">
        <p className={`${CN} w-[390px]`}>子识别态,句子识别态仅有惟一的一个。</p>
      </div>
      <div className="flex h-[33px] origin-left rotate-[0.25deg] items-center pl-[139px]">
        <p className={`${CN} w-[834px]`}>
          如果加一个开始状态 <i>X</i> 并用 ϵ 弧和每个识别可归前缀的有限自动机连接,则可变为图 <Num>7.3</Num>。
        </p>
      </div>
      <div className="flex h-[34px] items-center pl-[138px]">
        <p className={`${CN} w-[420px]`}>
          将图 <Num>7.3</Num> 确定化并重新编号后变为图 <Num>7.4</Num>。
        </p>
      </div>
      <div className="flex">
        <div className="w-[600px] shrink-0">
          <Figure73 />
          <Caption num="7.3" title="识别活前缀的不确定有限自动机" className="pl-[167px]" titleClass="ml-[18px] w-[268px]" />
        </div>
        <div className="w-[503px] shrink-0">
          <Figure74 />
          <Caption num="7.4" title="识别活前缀的确定有限自动机" className="pl-[25px]" titleClass="ml-[19px] w-[249px]" />
        </div>
      </div>
      <div className="mt-[34px] flex items-center pl-[873px] text-[22px] leading-none [-webkit-text-stroke:0.4px_#111]">
        <span className="h-[5px] w-[5px] rounded-full bg-[#111]" />
        <span className="ml-[14px] w-[34px]">127</span>
        <span className="ml-[14px] h-[5px] w-[5px] rounded-full bg-[#111]" />
      </div>
      <InkLayer />
    </div>
  );
}

export default function App() {
  return (
    <div className="h-[1536px] w-[2048px] overflow-hidden bg-[#f6f6f6] [font-family:Inter,'Noto_Sans_CJK_SC',sans-serif]">
      <header className="relative z-10">
        <div className="bg-[#4d5b80]">
          <StatusBar />
          <NavBar />
          <TabBar />
        </div>
        <ToolBar />
      </header>
      <main className="h-[1245px] overflow-hidden">
        <BookPage />
      </main>
    </div>
  );
}
